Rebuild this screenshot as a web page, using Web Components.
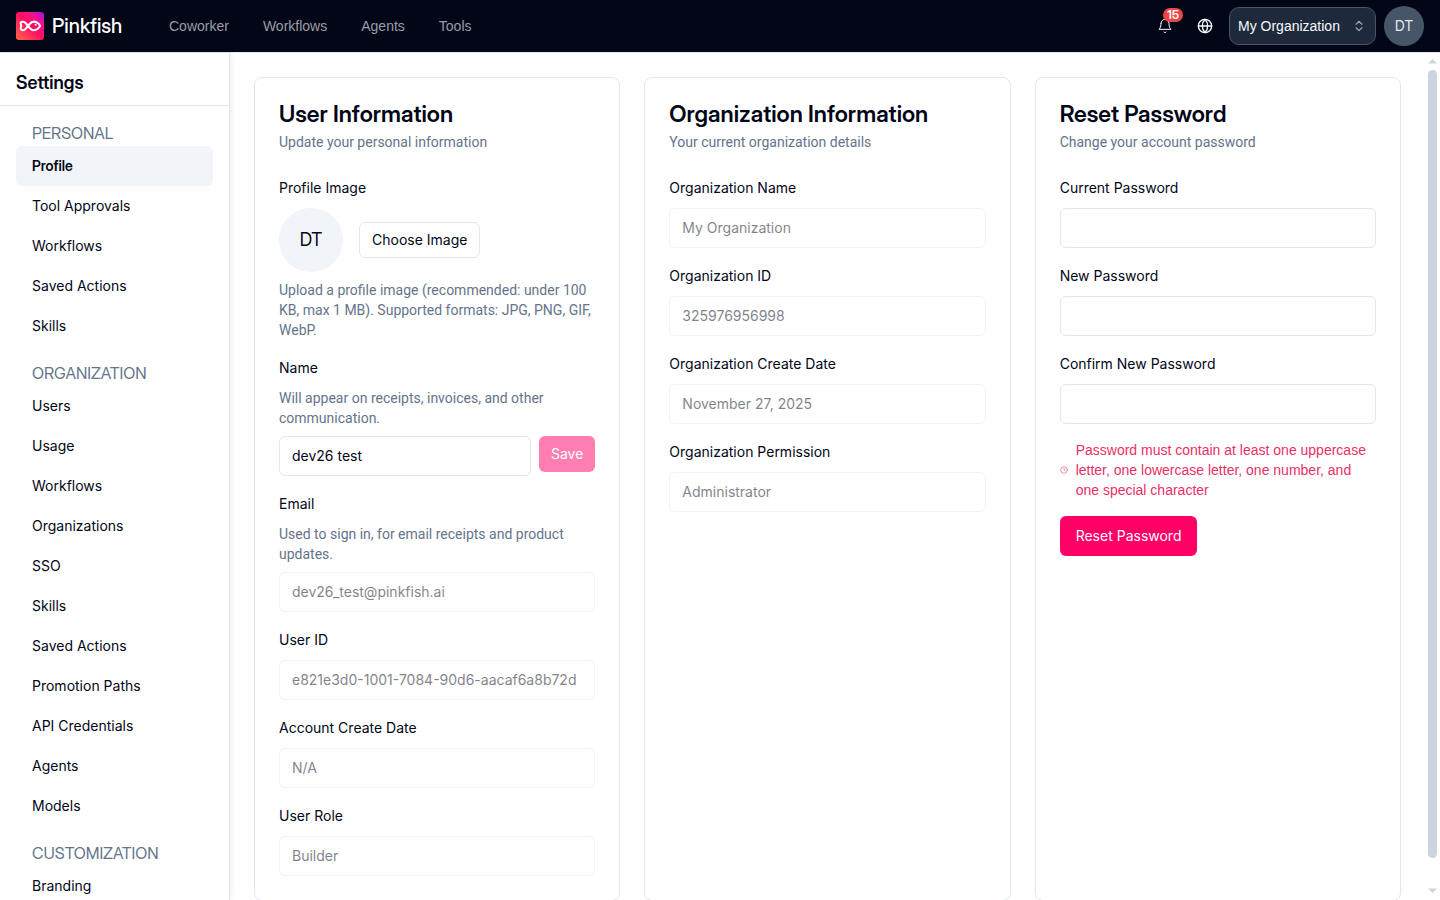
<!DOCTYPE html>
<html lang="en">
<head>
<meta charset="utf-8">
<title>Settings - Pinkfish</title>
<style>
body {
    --font-display: "Inter Display", Inter, sans-serif;
    --font-copy: Roboto, "Liberation Sans", sans-serif;
    --font-plain: "Liberation Sans", Arial, sans-serif;
    background: #fff;
    color: #020617;
    font-family: Inter, "Liberation Sans", sans-serif;
    font-size: 14px;
    line-height: 20px;
    margin: 0;
}
</style>
</head>
<body>
<app-shell>
    <top-bar slot="header"></top-bar>
    <side-nav slot="nav" heading="Settings">
        <nav-group label="PERSONAL">
            <nav-item active>Profile</nav-item>
            <nav-item>Tool Approvals</nav-item>
            <nav-item>Workflows</nav-item>
            <nav-item>Saved Actions</nav-item>
            <nav-item>Skills</nav-item>
        </nav-group>
        <nav-group label="ORGANIZATION">
            <nav-item>Users</nav-item>
            <nav-item>Usage</nav-item>
            <nav-item>Workflows</nav-item>
            <nav-item>Organizations</nav-item>
            <nav-item>SSO</nav-item>
            <nav-item>Skills</nav-item>
            <nav-item>Saved Actions</nav-item>
            <nav-item>Promotion Paths</nav-item>
            <nav-item>API Credentials</nav-item>
            <nav-item>Agents</nav-item>
            <nav-item>Models</nav-item>
        </nav-group>
        <nav-group label="CUSTOMIZATION">
            <nav-item>Branding</nav-item>
        </nav-group>
    </side-nav>

    <settings-card heading="User Information" description="Update your personal information">
        <image-picker label="Profile Image" initials="DT" hint="Upload a profile image (recommended: under 100 KB, max 1 MB). Supported formats: JPG, PNG, GIF, WebP."></image-picker>
        <form-field label="Name" value="dev26 test" hint="Will appear on receipts, invoices, and other communication.">
            <app-button slot="action" disabled small>Save</app-button>
        </form-field>
        <form-field label="Email" value="dev26_test@pinkfish.ai" hint="Used to sign in, for email receipts and product updates." disabled></form-field>
        <form-field label="User ID" value="e821e3d0-1001-7084-90d6-aacaf6a8b72d" disabled></form-field>
        <form-field label="Account Create Date" value="N/A" disabled></form-field>
        <form-field label="User Role" value="Builder" disabled></form-field>
    </settings-card>

    <settings-card heading="Organization Information" description="Your current organization details">
        <form-field label="Organization Name" value="My Organization" disabled></form-field>
        <form-field label="Organization ID" value="325976956998" disabled></form-field>
        <form-field label="Organization Create Date" value="November 27, 2025" disabled></form-field>
        <form-field label="Organization Permission" value="Administrator" disabled></form-field>
    </settings-card>

    <settings-card heading="Reset Password" description="Change your account password">
        <form-field label="Current Password" type="password"></form-field>
        <form-field label="New Password" type="password"></form-field>
        <form-field label="Confirm New Password" type="password"></form-field>
        <password-rule>Password must contain at least one uppercase letter, one lowercase letter, one number, and one special character</password-rule>
        <app-button>Reset Password</app-button>
    </settings-card>
</app-shell>

<script>
// shared by every element, the shadow roots do not see the page's rules
const base = `
*, *::before, *::after {
    box-sizing: border-box;
}

:host {
    box-sizing: border-box;
    display: block;
}

button, input {
    font: inherit;
    margin: 0;
}

h1, h2, p {
    margin: 0;
}

a {
    color: inherit;
    text-decoration: none;
}
`;

class BaseElement extends HTMLElement {
    constructor() {
        super();

        this.attachShadow({mode: 'open'});
    }

    attr(name) {
        return this.getAttribute(name) || '';
    }

    connectedCallback() {
        this.shadowRoot.innerHTML = `<style>${base}${this.css()}</style>${this.html()}`;
    }
}

class AppShell extends BaseElement {
    css() {
        return `
:host {
    display: flex;
    flex-direction: column;
    height: 100vh;
    overflow: hidden;
}

.body {
    display: flex;
    flex: 1;
    min-height: 0;
}

main {
    align-items: stretch;
    align-self: flex-start;
    display: grid;
    flex: 1;
    gap: 24px;
    grid-template-columns: repeat(3, minmax(0, 1fr));
    padding: 24px;
}
`;
    }

    html() {
        return `
<slot name="header"></slot>
<div class="body">
    <slot name="nav"></slot>
    <main><slot></slot></main>
    <scroll-track></scroll-track>
</div>`;
    }
}

class TopBar extends BaseElement {
    css() {
        return `
header {
    align-items: center;
    background: #020617;
    border-bottom: 1px solid #e2e8f0;
    display: flex;
    height: 53px;
    padding: 0 16px;
}

.brand {
    align-items: center;
    color: #fff;
    display: flex;
    font-family: var(--font-display);
    font-size: 20px;
    font-weight: 500;
    gap: 8px;
    width: 153px;
}

nav {
    color: #9a9da6;
    display: flex;
    flex: 1;
    font-family: var(--font-plain);
    gap: 34px;
}

.tools {
    align-items: center;
    display: flex;
    gap: 8px;
}

.icon {
    background: none;
    border: 0;
    color: #f8fafc;
    display: flex;
    height: 32px;
    justify-content: center;
    align-items: center;
    padding: 0;
    position: relative;
    width: 32px;
}

.badge {
    background: #ef4444;
    border-radius: 8px;
    color: #fff;
    font-family: var(--font-display);
    font-size: 12px;
    font-weight: 600;
    line-height: 14px;
    padding: 0 4px;
    position: absolute;
    right: -2px;
    top: -2px;
}

.org {
    align-items: center;
    background: #1e293b;
    border: 1px solid #475569;
    border-radius: 10px;
    color: #f8fafc;
    display: flex;
    height: 38px;
    justify-content: space-between;
    padding: 0 9px 0 8px;
    width: 147px;
}

.org span {
    font-family: var(--font-plain);
}

.avatar {
    background: #475569;
    border: 0;
    border-radius: 50%;
    color: #e2e8f0;
    height: 40px;
    padding: 0;
    width: 40px;
}
`;
    }

    html() {
        return `
<header>
    <a class="brand" href="#">
        <svg width="28" height="28" viewBox="0 0 28 28" fill="none">
            <defs>
                <linearGradient id="g" x1="2" y1="26" x2="27" y2="1" gradientUnits="userSpaceOnUse">
                    <stop offset="0" stop-color="#ff5a4a"/>
                    <stop offset=".5" stop-color="#ff0f62"/>
                    <stop offset=".75" stop-color="#f5108a"/>
                    <stop offset="1" stop-color="#a512d8"/>
                </linearGradient>
            </defs>
            <rect width="28" height="28" rx="3" fill="url(#g)"/>
            <path d="M4.8 10.6C5.6 9.3 8 9.2 9.6 11L13.6 15.8C15.4 18 18.4 18.6 20.8 17.4C22.6 16.4 23.6 15.2 24.1 13.9C23.5 12.4 22.4 11.2 20.7 10.3C18.3 9.2 15.4 9.8 13.6 12L9.6 16.8C8 18.6 5.6 18.5 4.9 17.2C4.3 16.1 5.2 15.2 5.2 13.9C5.2 12.5 4.2 11.7 4.8 10.6Z" stroke="#fff" stroke-width="2" stroke-linejoin="round"/>
            <circle cx="19.6" cy="12.8" r="1" fill="#fff"/>
        </svg>
        <span>Pinkfish</span>
    </a>
    <nav>
        <a href="#">Coworker</a>
        <a href="#">Workflows</a>
        <a href="#">Agents</a>
        <a href="#">Tools</a>
    </nav>
    <div class="tools">
        <button class="icon" aria-label="Notifications">
            <svg width="16" height="16" viewBox="0 0 24 24" fill="none" stroke="currentColor" stroke-width="1.5" stroke-linecap="round" stroke-linejoin="round">
                <path d="M6 8a6 6 0 0 1 12 0c0 7 3 9 3 9H3s3-2 3-9"/>
                <path d="M10.3 21a1.94 1.94 0 0 0 3.4 0"/>
            </svg>
            <span class="badge">15</span>
        </button>
        <button class="icon" aria-label="Language">
            <svg width="16" height="16" viewBox="0 0 24 24" fill="none" stroke="currentColor" stroke-width="2" stroke-linecap="round" stroke-linejoin="round">
                <circle cx="12" cy="12" r="10"/>
                <path d="M12 2a14.5 14.5 0 0 0 0 20 14.5 14.5 0 0 0 0-20"/>
                <path d="M2 12h20"/>
            </svg>
        </button>
        <button class="org" aria-haspopup="listbox">
            <span>My Organization</span>
            <svg width="14" height="14" viewBox="0 0 24 24" fill="none" stroke="#a3adba" stroke-width="2" stroke-linecap="round" stroke-linejoin="round">
                <path d="m7 15 5 5 5-5"/>
                <path d="m7 9 5-5 5 5"/>
            </svg>
        </button>
        <button class="avatar">DT</button>
    </div>
</header>`;
    }
}

class SideNav extends BaseElement {
    css() {
        return `
:host {
    border-right: 1px solid #e2e8f0;
    box-shadow: 1px 0 6px rgba(0, 0, 0, 0.08);
    flex: none;
    overflow: hidden;
    width: 230px;
}

h1 {
    border-bottom: 1px solid #e2e8f0;
    font-family: var(--font-display);
    font-size: 18px;
    font-weight: 600;
    line-height: 28px;
    padding: 16px 16px 8px;
}

nav {
    display: flex;
    flex-direction: column;
    gap: 16px;
    padding: 16px;
}
`;
    }

    html() {
        return `
<h1>${this.attr('heading')}</h1>
<nav><slot></slot></nav>`;
    }
}

class NavGroup extends BaseElement {
    css() {
        return `
h2 {
    color: #64748b;
    font-family: var(--font-display);
    font-size: 16px;
    font-weight: 400;
    line-height: 22px;
    padding: 0 16px 2px;
}
`;
    }

    html() {
        return `<h2>${this.attr('label')}</h2><slot></slot>`;
    }
}

class NavItem extends BaseElement {
    css() {
        return `
a {
    border-radius: 6px;
    display: block;
    line-height: 24px;
    padding: 8px 16px;
}

:host([active]) a {
    background: #f1f5f9;
    font-family: var(--font-display);
    font-weight: 600;
}
`;
    }

    html() {
        return '<a href="#"><slot></slot></a>';
    }
}

class SettingsCard extends BaseElement {
    css() {
        return `
:host {
    border: 1px solid #e2e8f0;
    border-radius: 8px;
    padding: 24px;
}

h2 {
    font-family: var(--font-display);
    font-size: 23px;
    font-weight: 600;
    line-height: 24px;
    white-space: nowrap;
}

p {
    color: #64748b;
    font-family: var(--font-copy);
    margin-top: 6px;
}

.content {
    align-items: flex-start;
    display: flex;
    flex-direction: column;
    gap: 16px;
    padding-top: 24px;
}
`;
    }

    html() {
        return `
<h2>${this.attr('heading')}</h2>
<p>${this.attr('description')}</p>
<div class="content"><slot></slot></div>`;
    }
}

class FormField extends BaseElement {
    css() {
        return `
:host {
    width: 100%;
}

label {
    display: block;
    line-height: 24px;
}

.hint {
    color: #64748b;
    font-family: var(--font-copy);
    margin-top: 8px;
}

.row {
    align-items: flex-start;
    display: flex;
    gap: 8px;
    margin-top: 8px;
}

input {
    background: #fff;
    border: 1px solid #e2e8f0;
    border-radius: 6px;
    color: #020617;
    flex: 1;
    height: 40px;
    min-width: 0;
    padding: 0 12px 2px;
}

input:disabled {
    opacity: 0.5;
}
`;
    }

    html() {
        const hint = this.attr('hint');
        return `
<label for="field">${this.attr('label')}</label>
${hint ? `<p class="hint">${hint}</p>` : ''}
<div class="row">
    <input id="field" type="${this.attr('type') || 'text'}" value="${this.attr('value')}" ${this.hasAttribute('disabled') ? 'disabled' : ''}>
    <slot name="action"></slot>
</div>`;
    }
}

class ImagePicker extends BaseElement {
    css() {
        return `
.label {
    line-height: 24px;
}

.row {
    align-items: center;
    display: flex;
    gap: 16px;
    margin: 8px 0;
}

.avatar {
    align-items: center;
    background: #f1f5f9;
    border-radius: 50%;
    display: flex;
    font-family: var(--font-display);
    font-size: 18px;
    height: 64px;
    justify-content: center;
    width: 64px;
}

p {
    color: #64748b;
    font-family: var(--font-copy);
}
`;
    }

    html() {
        return `
<div class="label">${this.attr('label')}</div>
<div class="row">
    <div class="avatar">${this.attr('initials')}</div>
    <app-button outline small>Choose Image</app-button>
</div>
<p>${this.attr('hint')}</p>`;
    }
}

class AppButton extends BaseElement {
    css() {
        return `
button {
    background: #ff0066;
    border: 0;
    border-radius: 6px;
    color: #f8fafc;
    display: block;
    height: 40px;
    padding: 0 16px;
    white-space: nowrap;
}

button:disabled {
    opacity: 0.5;
}

:host([small]) button {
    height: 36px;
    padding: 0 12px;
}

:host([outline]) button {
    background: #fff;
    border: 1px solid #e2e8f0;
    color: #020617;
}
`;
    }

    html() {
        return `<button type="button" ${this.hasAttribute('disabled') ? 'disabled' : ''}><slot></slot></button>`;
    }
}

class PasswordRule extends BaseElement {
    css() {
        return `
:host {
    align-items: center;
    color: #ea2f66;
    display: flex;
    font-family: var(--font-plain);
    gap: 8px;
}

svg {
    flex: none;
    opacity: 0.8;
}
`;
    }

    html() {
        return `
<svg width="8" height="8" viewBox="0 0 24 24" fill="none" stroke="currentColor" stroke-width="2" stroke-linecap="round">
    <circle cx="12" cy="12" r="10"/>
    <path d="M12 7v5l3 3"/>
</svg>
<p><slot></slot></p>`;
    }
}

class ScrollTrack extends BaseElement {
    css() {
        return `
:host {
    align-items: center;
    color: #cbd5e1;
    display: flex;
    flex: none;
    flex-direction: column;
    gap: 6px;
    padding: 5px 0 6px;
    width: 15px;
}

.track {
    flex: 1;
    width: 9px;
}

.thumb {
    background: currentColor;
    border-radius: 5px;
    height: 97%;
}
`;
    }

    html() {
        return `
<svg width="9" height="6"><path d="M0 5.5 4.5 1 9 5.5Z" fill="currentColor"/></svg>
<div class="track"><div class="thumb"></div></div>
<svg width="9" height="6"><path d="M0 .5 4.5 5 9 .5Z" fill="currentColor"/></svg>`;
    }
}

customElements.define('scroll-track', ScrollTrack);
customElements.define('app-button', AppButton);
customElements.define('password-rule', PasswordRule);
customElements.define('image-picker', ImagePicker);
customElements.define('form-field', FormField);
customElements.define('settings-card', SettingsCard);
customElements.define('nav-item', NavItem);
customElements.define('nav-group', NavGroup);
customElements.define('side-nav', SideNav);
customElements.define('top-bar', TopBar);
customElements.define('app-shell', AppShell);
</script>
</body>
</html>
